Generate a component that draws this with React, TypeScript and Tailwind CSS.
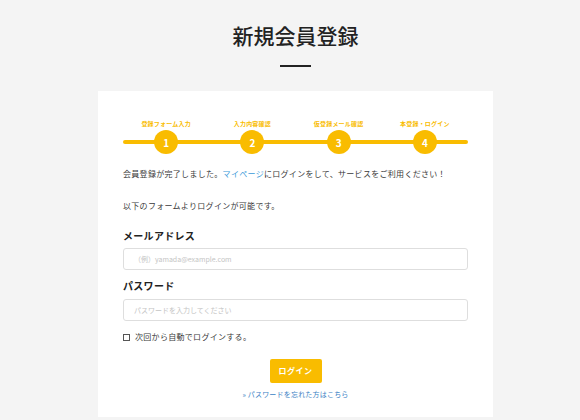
import React from 'react';

const steps = ['登録フォーム入力', '入力内容確認', '仮登録メール確認', '本登録・ログイン'];

export default function App() {
  return (
    <div className="min-h-[420px] bg-[#f4f4f4] pl-[11px] flex flex-col items-center font-['Noto_Sans_CJK_JP',sans-serif] text-[#333]">
      {/* Page title */}
      <h1 className="pt-[24px] text-[21px] leading-[22px] font-medium text-[#222]">新規会員登録</h1>
      <div className="mt-[19px] w-[31px] h-[2px] bg-[#222]" />

      {/* Card */}
      <div className="mt-[24px] w-[395px] bg-white px-[25px] pt-[29px] pb-[18px]">
        {/* Steps */}
        <div className="relative">
          <div className="absolute left-0 right-0 top-[20px] h-[4px] rounded-full bg-[#f9bc00]" />
          <div className="relative grid grid-cols-4">
            {steps.map((s, i) => (
              <div key={s} className="flex flex-col items-center">
                <span className="text-[6px] leading-[8px] font-bold text-[#f9bc00] tracking-[0.2px]">{s}</span>
                <span className="mt-[2px] w-[24px] h-[24px] rounded-full bg-[#f9bc00] text-white text-[10px] font-bold flex items-center justify-center">
                  {i + 1}
                </span>
              </div>
            ))}
          </div>
        </div>

        {/* Messages */}
        <p className="mt-[14px] text-[8px] leading-[12px] tracking-[0.3px] text-[#3a3a3a]">
          会員登録が完了しました。<span className="text-[#3b9ad9]">マイページ</span>にログインをして、サービスをご利用ください！
        </p>
        <p className="mt-[20px] text-[8px] leading-[12px] tracking-[0.3px] text-[#3a3a3a]">以下のフォームよりログインが可能です。</p>

        {/* Form */}
        <label className="block mt-[17px] text-[10px] leading-[14px] font-bold text-[#222] tracking-[0.3px]">メールアドレス</label>
        <input
          type="text"
          placeholder="（例）yamada@example.com"
          className="mt-[4px] w-full h-[22px] rounded-[3px] border border-[#dedede] px-[10px] text-[7px] placeholder:text-[#c4c4c4] outline-none"
        />

        <label className="block mt-[9px] text-[10px] leading-[14px] font-bold text-[#222] tracking-[0.3px]">パスワード</label>
        <input
          type="password"
          placeholder="パスワードを入力してください"
          className="mt-[6px] w-full h-[22px] rounded-[3px] border border-[#dedede] px-[10px] text-[7px] placeholder:text-[#c4c4c4] outline-none"
        />

        <div className="mt-[10px] flex items-center gap-[5px] text-[8px] leading-[12px] tracking-[0.3px] text-[#3a3a3a]">
          <span className="w-[7px] h-[7px] border border-[#555] bg-white" />
          <span>次回から自動でログインする。</span>
        </div>

        <div className="mt-[16px] flex justify-center">
          <button className="w-[52px] h-[24px] rounded-[2px] bg-[#f9bc00] text-white text-[8px] font-bold tracking-[0.5px]">
            ログイン
          </button>
        </div>
        <div className="mt-[6px] text-center text-[7px] leading-[10px] text-[#3b7fc4] tracking-[0.2px]">
          » パスワードを忘れた方はこちら
        </div>
      </div>
    </div>
  );
}
